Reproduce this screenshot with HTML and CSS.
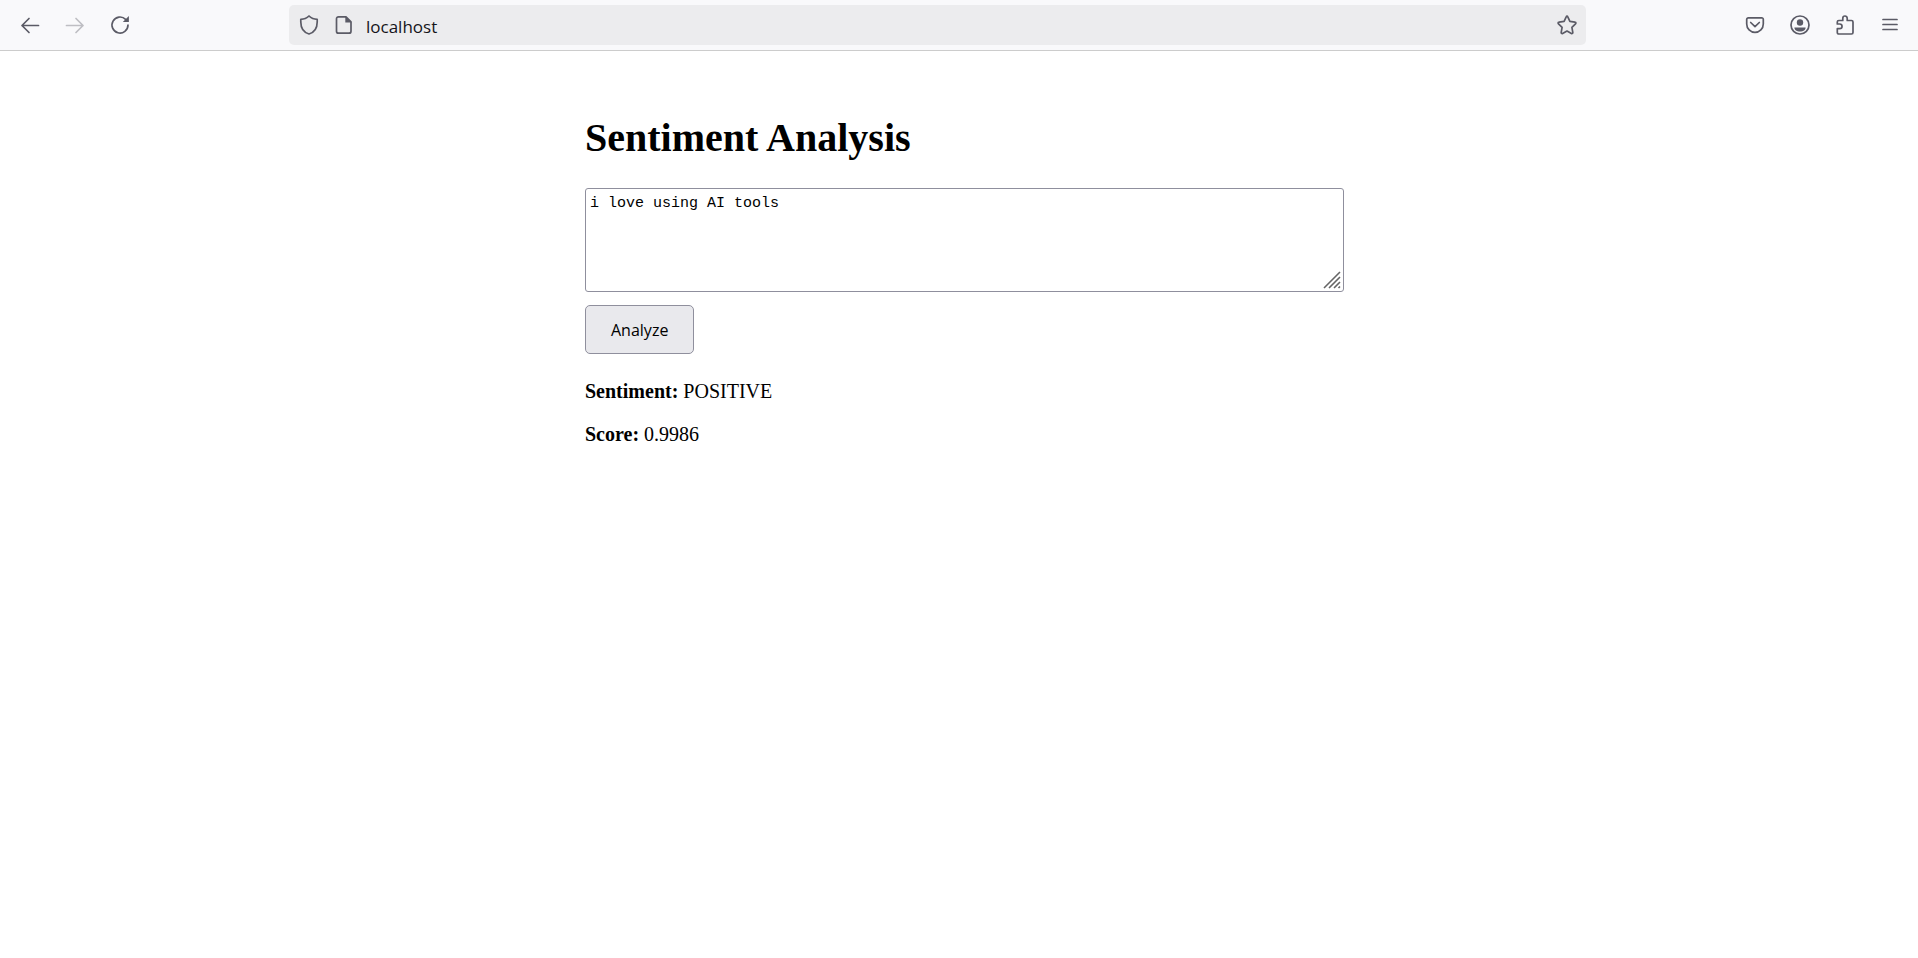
FILE: index.html
```html
<!DOCTYPE html>
<html lang="en">
<head>
<meta charset="utf-8">
<title>Sentiment Analysis</title>
<link rel="stylesheet" href="styles.css">
</head>
<body>
<header class="toolbar">
  <nav class="nav-buttons" aria-label="Navigation">
    <button class="icon-button" type="button" aria-label="Back">
      <svg class="icon" viewBox="0 0 20 20"><path d="M18.500 10.500H2M9 3.500l-7 7 7 7"/></svg>
    </button>
    <button class="icon-button" type="button" aria-label="Forward" disabled>
      <svg class="icon" viewBox="0 0 20 20"><path d="M1.500 10.500H18M11 3.500l7 7-7 7"/></svg>
    </button>
    <button class="icon-button" type="button" aria-label="Reload">
      <svg class="icon" viewBox="0 0 20 20"><path d="M18 10a8 8 0 1 1-2.400-5.700"/><path class="solid" d="M18.900 1v6.100h-6.100z"/></svg>
    </button>
  </nav>
  <div class="url-bar">
    <svg class="icon" viewBox="0 0 20 20"><path d="M10 1C12 3 15 4.300 18.200 4.300V7C18.200 13 15 17.500 10 19C5 17.500 1.800 13 1.800 7V4.300C5 4.300 8 3 10 1z"/></svg>
    <svg class="icon page-icon" viewBox="0 0 20 20"><path d="M4.500 1.800h7.500l5 5v9.400a2 2 0 0 1-2 2H4.500a2 2 0 0 1-2-2V3.800a2 2 0 0 1 2-2z"/><path class="solid" d="M11.300 1.300v6.200h6.200z"/></svg>
    <input class="url-input" type="text" aria-label="Address" value="localhost">
    <button class="icon-button star-button" type="button" aria-label="Bookmark">
      <svg class="icon" viewBox="0 0 20 20"><path d="M10 1.200q.5 0 .8.700l2.100 4.500 5 .7c1 .1 1.300 1 .6 1.700l-3.600 3.500.9 5c.1 1-.6 1.500-1.400 1.100L10 16l-4.400 2.400c-.8.400-1.500-.1-1.400-1.100l.9-5L1.500 8.800c-.7-.7-.4-1.600.6-1.700l5-.7 2.100-4.500q.3-.7.8-.7z"/></svg>
    </button>
  </div>
  <div class="tool-buttons">
    <button class="icon-button" type="button" aria-label="Save to Pocket">
      <svg class="icon" viewBox="0 0 20 20"><path d="M3.300 2.800h13.400a1.600 1.600 0 0 1 1.600 1.600V9a8.300 8.300 0 0 1-16.600 0V4.400a1.600 1.600 0 0 1 1.600-1.600z"/><path d="M5.700 7.500L10 11.700l4.300-4.200"/></svg>
    </button>
    <button class="icon-button" type="button" aria-label="Account">
      <svg class="icon" viewBox="0 0 20 20"><circle cx="10" cy="10" r="9"/><circle class="solid" cx="10" cy="7.500" r="3.200"/><path class="solid" d="M4.400 12.400h11.200c0 2.700-2.500 4-5.600 4s-5.600-1.300-5.600-4z"/></svg>
    </button>
    <button class="icon-button" type="button" aria-label="Extensions">
      <svg class="icon" viewBox="0 0 20 20"><path d="M2.300 9V7a1.500 1.500 0 0 1 1.500-1.500h4V3.200a2.200 2.200 0 0 1 4.400 0v2.300h4.300A1.500 1.500 0 0 1 18 7v10.500a1.500 1.500 0 0 1-1.500 1.500H3.800a1.500 1.500 0 0 1-1.500-1.500v-3.800h2.400a2.350 2.350 0 0 0 0-4.700z"/></svg>
    </button>
    <button class="icon-button" type="button" aria-label="Menu">
      <svg class="icon" viewBox="0 0 20 20"><path d="M3 4.500h14M3 9.500h14M3 14.500h14"/></svg>
    </button>
  </div>
</header>
<main class="page">
  <h1 class="title">Sentiment Analysis</h1>
  <form class="form">
    <div class="field">
      <textarea class="text-input" aria-label="Text to analyze" spellcheck="false">i love using AI tools</textarea>
      <svg class="grip" viewBox="0 0 18 18" aria-hidden="true"><path d="M1 17L17 1M6 17L17 6M11 17l6-6M15.500 17l1.500-1.500"/></svg>
    </div>
    <button class="analyze" type="button">Analyze</button>
  </form>
  <p class="result"><strong>Sentiment:</strong> POSITIVE</p>
  <p class="result"><strong>Score:</strong> 0.9986</p>
</main>
</body>
</html>
```

FILE: styles.css
```css
* {
  box-sizing: border-box;
}

body {
  margin: 0;
  background: #fff;
  color: #000;
  font-family: "Liberation Serif", "Times New Roman", serif;
  font-size: 20px;
}

.toolbar {
  display: flex;
  align-items: center;
  padding: 5px 11px 5px 13px;
  border-bottom: 1px solid #ccc;
  background: #f9f9fb;
}

.nav-buttons,
.tool-buttons {
  display: flex;
  flex: none;
  gap: 11px;
}

.nav-buttons {
  width: 276px;
}

.tool-buttons {
  justify-content: flex-end;
  width: 321px;
}

.icon-button {
  display: flex;
  align-items: center;
  justify-content: center;
  width: 34px;
  height: 34px;
  padding: 0;
  border: 0;
  background: none;
  color: #5b5b66;
}

.icon-button:disabled {
  color: #bebec3;
}

.icon {
  flex: none;
  width: 20px;
  height: 20px;
  fill: none;
  stroke: currentColor;
  stroke-width: 1.7;
  stroke-linecap: round;
  stroke-linejoin: round;
}

.icon .solid {
  fill: currentColor;
  stroke: none;
}

.url-bar {
  display: flex;
  flex: 1;
  align-items: center;
  height: 40px;
  padding: 0 2px 0 10px;
  border-radius: 5px;
  background: #ececee;
  color: #5b5b66;
}

.page-icon {
  margin-left: 15px;
}

.url-input {
  flex: 1;
  min-width: 0;
  margin-left: 12px;
  padding: 2px 0 0;
  border: 0;
  outline: 0;
  background: none;
  color: #15141a;
  font-family: "Open Sans", "Noto Sans", sans-serif;
  font-size: 17px;
}

.page {
  max-width: 748px;
  margin: 64px auto 0;
}

.title {
  margin: 0 0 27px;
  font-size: 40px;
  line-height: 46px;
}

.form {
  display: flex;
  flex-direction: column;
  align-items: flex-start;
  gap: 13px;
}

.field {
  position: relative;
  width: calc(100% + 11px);
}

.text-input {
  display: block;
  width: 100%;
  height: 104px;
  padding: 6px 4px;
  border: 1px solid #8f8f9d;
  border-radius: 3px;
  outline: 0;
  resize: none;
  background: #fff;
  color: #000;
  font-family: "Liberation Mono", monospace;
  font-size: 15px;
}

.grip {
  position: absolute;
  right: 3px;
  bottom: 3px;
  width: 18px;
  height: 18px;
  fill: none;
  stroke: #666;
  stroke-width: 1.6;
  pointer-events: none;
}

.analyze {
  height: 49px;
  padding: 0 25px;
  border: 1px solid #8f8f9d;
  border-radius: 5px;
  background: #e9e9ed;
  color: #000;
  font-family: "Open Sans", "Noto Sans", sans-serif;
  font-size: 16px;
}

.result {
  margin: 20px 0;
  line-height: 23px;
}

.form + .result {
  margin-top: 26px;
}
```
